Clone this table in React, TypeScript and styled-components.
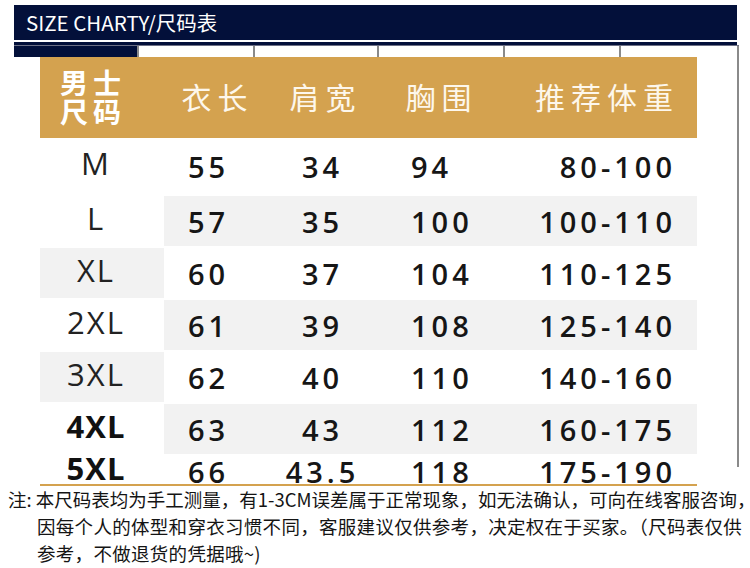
import styled, { createGlobalStyle } from "styled-components";

type SizeRow = {
  size: string;
  length: string;
  shoulder: string;
  chest: string;
  weight: string;
  bold?: boolean;
};

const rows: SizeRow[] = [
  { size: "M", length: "55", shoulder: "34", chest: "94", weight: "80-100" },
  { size: "L", length: "57", shoulder: "35", chest: "100", weight: "100-110" },
  { size: "XL", length: "60", shoulder: "37", chest: "104", weight: "110-125" },
  { size: "2XL", length: "61", shoulder: "39", chest: "108", weight: "125-140" },
  { size: "3XL", length: "62", shoulder: "40", chest: "110", weight: "140-160" },
  { size: "4XL", length: "63", shoulder: "43", chest: "112", weight: "160-175", bold: true },
  { size: "5XL", length: "66", shoulder: "43.5", chest: "118", weight: "175-190", bold: true },
];

const NAVY = "#03103a";
const GOLD = "#d4a24f";
const STRIPE = "#f2f2f2";
const LINE = "#8a8a8a";

const GlobalStyle = createGlobalStyle`
  body {
    margin: 0;
    background: #fff;
    font-family: "Noto Sans CJK SC", "Noto Sans", sans-serif;
  }
`;

const App = () => {
  return (
    <>
      <GlobalStyle />
      <Page>
        <TitleBar>SIZE CHARTY/尺码表</TitleBar>
        <NavyRule />
        <Sheet>
          <TabStrip>
            <Tab $dark />
            <Tab />
            <Tab />
            <Tab />
            <Tab />
            <Tab />
          </TabStrip>
          <Table>
            <HeadCorner>
              <span>男士</span>
              <span>尺码</span>
            </HeadCorner>
            <HeadCell>衣长</HeadCell>
            <HeadCell>肩宽</HeadCell>
            <HeadCell>胸围</HeadCell>
            <HeadCell $align="right">推荐体重</HeadCell>
            {rows.map((r, i) => {
              const dataGray = i % 2 === 1;
              const sizeGray = i % 2 === 0 && i > 0 && i < 6;
              const kind = i === 0 ? "first" : i === rows.length - 1 ? "last" : "mid";
              return (
                <Row key={r.size} $kind={kind}>
                  <SizeCell $gray={sizeGray} $bold={r.bold}>
                    {r.size}
                  </SizeCell>
                  <DataCell $gray={dataGray} $padRight={12}>
                    {r.length}
                  </DataCell>
                  <DataCell $gray={dataGray}>{r.shoulder}</DataCell>
                  <DataCell $gray={dataGray} $align="left">
                    {r.chest}
                  </DataCell>
                  <DataCell $gray={dataGray} $align="right">
                    {r.weight}
                  </DataCell>
                </Row>
              );
            })}
          </Table>
        </Sheet>
        <GoldRule />
        <Note>
          <NoteLine>注: 本尺码表均为手工测量，有1-3CM误差属于正常现象，如无法确认，可向在线客服咨询，</NoteLine>
          <NoteLine $indent>因每个人的体型和穿衣习惯不同，客服建议仅供参考，决定权在于买家。（尺码表仅供</NoteLine>
          <NoteLine $indent>参考，不做退货的凭据哦~)</NoteLine>
        </Note>
      </Page>
    </>
  );
};

export default App;

const Page = styled.div`
  width: 750px;
  height: 568px;
  padding-top: 5px;
  box-sizing: border-box;
  overflow: hidden;
`;

const TitleBar = styled.div`
  margin-left: 14px;
  width: 723px;
  height: 35px;
  background: ${NAVY};
  color: #fff;
  font-size: 20.5px;
  line-height: 35px;
  padding-left: 12px;
  box-sizing: border-box;
`;

const NavyRule = styled.div`
  margin: 2px 0 0 14px;
  width: 723px;
  height: 3px;
  background: ${NAVY};
`;

const Sheet = styled.div`
  position: relative;
  margin-left: 14px;
  width: 725px;

  &::after {
    content: "";
    position: absolute;
    top: 1px;
    right: 0;
    bottom: 17px;
    width: 2px;
    background: ${LINE};
  }
`;

const TabStrip = styled.div`
  display: grid;
  grid-template-columns: 123px 116px 124px 126px 116px 1fr;
  height: 12px;
  border-top: 1px solid #6d7085;
  box-sizing: border-box;
`;

const Tab = styled.div<{ $dark?: boolean }>`
  background: ${(p) => (p.$dark ? NAVY : "#fff")};
  border-left: ${(p) => (p.$dark ? "none" : `2px solid ${LINE}`)};
`;

const Table = styled.div`
  margin-left: 26px;
  width: 657px;
  height: 427px;
  overflow: hidden;
  display: grid;
  grid-template-columns: 124px 101px 115px 117px 200px;
  grid-auto-rows: min-content;
  color: #161616;
`;

const HeadCorner = styled.div`
  height: 81px;
  background: ${GOLD};
  color: #fff;
  font-weight: 700;
  font-size: 28px;
  line-height: 29px;
  letter-spacing: 5px;
  padding: 0 0 1px 20px;
  display: flex;
  flex-direction: column;
  justify-content: center;
  box-sizing: border-box;
  white-space: nowrap;
`;

const HeadCell = styled.div<{ $align?: "right" }>`
  height: 81px;
  background: ${GOLD};
  color: #fdf7ec;
  font-size: 30px;
  letter-spacing: 6px;
  display: flex;
  align-items: center;
  justify-content: ${(p) => (p.$align === "right" ? "flex-end" : "center")};
  padding: 0 ${(p) => (p.$align === "right" ? "18px" : "0")} 3px
    ${(p) => (p.$align === "right" ? "0" : "6px")};
  box-sizing: border-box;
`;

const rowHeight = { first: "56px", mid: "50px", last: "30px" };

const Row = styled.div<{ $kind: "first" | "mid" | "last" }>`
  display: contents;
  & > * {
    height: ${(p) => rowHeight[p.$kind]};
    margin-bottom: 2px;
  }
`;

const SizeCell = styled.div<{ $gray?: boolean; $bold?: boolean }>`
  background: ${(p) => (p.$gray ? STRIPE : "#fff")};
  font-family: "Open Sans", "Liberation Sans", sans-serif;
  font-size: 31px;
  font-weight: ${(p) => (p.$bold ? 700 : 400)};
  letter-spacing: ${(p) => (p.$bold ? "1px" : "2px")};
  color: ${(p) => (p.$bold ? "#111" : "#222")};
  display: flex;
  align-items: center;
  justify-content: center;
  padding: 0 12px 6px 0;
  box-sizing: border-box;
`;

const DataCell = styled.div<{
  $gray?: boolean;
  $align?: "left" | "right";
  $padRight?: number;
}>`
  background: ${(p) => (p.$gray ? STRIPE : "#fff")};
  font-family: "Open Sans", "Liberation Sans", sans-serif;
  font-size: 29px;
  font-weight: 600;
  letter-spacing: 4px;
  display: flex;
  align-items: center;
  justify-content: ${(p) =>
    p.$align === "left" ? "flex-start" : p.$align === "right" ? "flex-end" : "center"};
  padding: 1px ${(p) => (p.$align === "right" ? 21 : p.$padRight ?? 0)}px 0
    ${(p) => (p.$align === "left" ? "31px" : "0")};
  box-sizing: border-box;
`;

const GoldRule = styled.div`
  margin-left: 40px;
  width: 657px;
  height: 2px;
  background: ${GOLD};
`;

const Note = styled.div`
  padding-left: 8px;
  font-size: 18.5px;
  line-height: 27px;
  color: #141414;
`;

const NoteLine = styled.div<{ $indent?: boolean }>`
  white-space: nowrap;
  padding-left: ${(p) => (p.$indent ? "29px" : "0")};
  letter-spacing: ${(p) => (p.$indent ? "0.3px" : "0")};
`;
